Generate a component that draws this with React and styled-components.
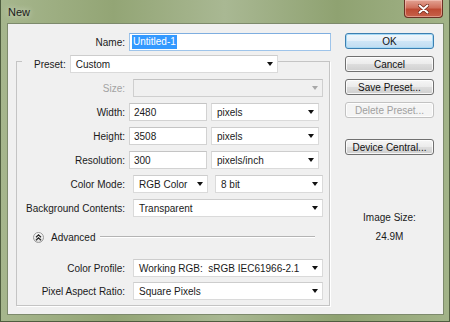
import styled, {createGlobalStyle} from 'styled-components';

const GlobalStyle = createGlobalStyle`
  html, body {
    margin: 0;
    padding: 0;
    background: #ffffff;
  }
  body {
    font-family: "Liberation Sans", Arial, sans-serif;
    font-size: 10px;
    color: #111;
  }
`;

export default function App() {
  return (
    <>
      <GlobalStyle />
      <Window>
        <TitleBar>
          <Title>New</Title>
          <CloseButton>
            <svg width="11" height="10" viewBox="0 0 11 10">
              <path
                d="M1.5 1.5 L9.5 8.5 M9.5 1.5 L1.5 8.5"
                stroke="#6b2416"
                strokeWidth="3.4"
                strokeLinecap="round"
              />
              <path
                d="M1.5 1.5 L9.5 8.5 M9.5 1.5 L1.5 8.5"
                stroke="#ffffff"
                strokeWidth="2"
                strokeLinecap="round"
              />
            </svg>
          </CloseButton>
        </TitleBar>
        <Client>
          <MainColumn>
            <Row>
              <Label $width={113}>Name:</Label>
              <TextBox $focused $grow>
                <Selected>Untitled-1</Selected>
              </TextBox>
            </Row>

            <GroupBox>
              <Legend>
                <LegendLabel>Preset:</LegendLabel>
                <Select $width={208}>
                  Custom
                  <Arrow />
                </Select>
              </Legend>

              <Rows>
                <Row>
                  <Label $disabled>Size:</Label>
                  <Select $width={190} $disabled>
                    <span />
                    <Arrow $disabled />
                  </Select>
                </Row>
                <Row>
                  <Label>Width:</Label>
                  <TextBox $width={78}>2480</TextBox>
                  <Select $width={108}>
                    pixels
                    <Arrow />
                  </Select>
                </Row>
                <Row>
                  <Label>Height:</Label>
                  <TextBox $width={78}>3508</TextBox>
                  <Select $width={108}>
                    pixels
                    <Arrow />
                  </Select>
                </Row>
                <Row>
                  <Label>Resolution:</Label>
                  <TextBox $width={78}>300</TextBox>
                  <Select $width={108}>
                    pixels/inch
                    <Arrow />
                  </Select>
                </Row>
                <Row>
                  <Label>Color Mode:</Label>
                  <Select $width={75}>
                    RGB Color
                    <Arrow />
                  </Select>
                  <Select $width={108} $gap={7}>
                    8 bit
                    <Arrow />
                  </Select>
                </Row>
                <Row>
                  <Label>Background Contents:</Label>
                  <Select $width={190}>
                    Transparent
                    <Arrow />
                  </Select>
                </Row>
              </Rows>

              <AdvancedRow>
                <ToggleIcon>
                  <svg width="7" height="7" viewBox="0 0 7 7">
                    <path
                      d="M1 3.2 L3.5 0.9 L6 3.2 M1 6.2 L3.5 3.9 L6 6.2"
                      stroke="#222"
                      strokeWidth="1.2"
                      fill="none"
                    />
                  </svg>
                </ToggleIcon>
                <AdvancedText>Advanced</AdvancedText>
                <Etched />
              </AdvancedRow>

              <Rows $gap={5}>
                <Row>
                  <Label>Color Profile:</Label>
                  <Select $width={190}>
                    Working RGB:&nbsp; sRGB IEC61966-2.1
                    <Arrow />
                  </Select>
                </Row>
                <Row>
                  <Label>Pixel Aspect Ratio:</Label>
                  <Select $width={190}>
                    Square Pixels
                    <Arrow />
                  </Select>
                </Row>
              </Rows>
            </GroupBox>
          </MainColumn>

          <SideColumn>
            <Button $default>OK</Button>
            <Button>Cancel</Button>
            <Button>Save Preset...</Button>
            <Button $disabled>Delete Preset...</Button>
            <Button $space={21}>Device Central...</Button>
            <SizeInfo>
              <span>Image Size:</span>
              <span>24.9M</span>
            </SizeInfo>
          </SideColumn>
        </Client>
      </Window>
    </>
  );
}

const Window = styled.div`
  box-sizing: border-box;
  width: 450px;
  height: 322px;
  display: flex;
  flex-direction: column;
  padding: 0 5px 6px 6px;
  border: 1px solid #4f5d3f;
  border-top: none;
  background: linear-gradient(
    90deg,
    #a6b68d 0%,
    #93a575 25%,
    #a9b893 50%,
    #8fa271 75%,
    #a2b388 100%
  );
`;

const TitleBar = styled.div`
  height: 23px;
  display: flex;
  align-items: flex-start;
  justify-content: space-between;
  flex-shrink: 0;
`;

const Title = styled.div`
  padding: 6px 0 0 1px;
  font-size: 11px;
  color: #1a1a1a;
  text-shadow: 0 0 6px rgba(255, 255, 255, 0.7);
`;

const CloseButton = styled.div`
  box-sizing: border-box;
  width: 39px;
  height: 18px;
  margin-right: 1px;
  display: flex;
  align-items: center;
  justify-content: center;
  border: 1px solid #6a3024;
  border-top: none;
  border-radius: 0 0 4px 4px;
  background: linear-gradient(180deg, #e3a394 0%, #d0705c 45%, #bd4a33 55%, #c7614a 100%);
  box-shadow: inset 0 0 0 1px rgba(255, 220, 210, 0.45);
`;

const Client = styled.div`
  flex: 1;
  display: flex;
  gap: 14px;
  padding: 9px 9px 0 8px;
  background: #f0f0f0;
  border: 1px solid #7d8a6c;
`;

const MainColumn = styled.div`
  width: 315px;
  display: flex;
  flex-direction: column;
`;

const Row = styled.div`
  display: flex;
  align-items: center;
  height: 18px;
`;

const Label = styled.div`
  box-sizing: border-box;
  width: ${p => p.$width || 112}px;
  padding-right: 4px;
  text-align: right;
  white-space: nowrap;
  color: ${p => (p.$disabled ? '#a3a3a3' : '#1a1a1a')};
`;

const TextBox = styled.div`
  box-sizing: border-box;
  height: 18px;
  ${p => (p.$grow ? 'flex: 1;' : `width: ${p.$width}px;`)}
  display: flex;
  align-items: center;
  padding-left: ${p => (p.$focused ? 2 : 4)}px;
  background: #ffffff;
  border: 1px solid ${p => (p.$focused ? '#9ec4ea' : '#d2d2d2')};
  border-top-color: ${p => (p.$focused ? '#7eaee0' : '#c4c4c4')};
  color: #1a1a1a;
`;

const Selected = styled.span`
  background: #3399ff;
  color: #ffffff;
  padding: 1px 1px;
  line-height: 12px;
`;

const Select = styled.div`
  box-sizing: border-box;
  height: 18px;
  width: ${p => p.$width}px;
  margin-left: ${p => p.$gap ?? 4}px;
  display: flex;
  align-items: center;
  justify-content: space-between;
  padding: 0 4px 0 5px;
  white-space: nowrap;
  background: ${p => (p.$disabled ? '#f0f0f0' : '#ffffff')};
  border: 1px solid ${p => (p.$disabled ? '#cfcfcf' : '#dadada')};
  border-top-color: ${p => (p.$disabled ? '#c2c2c2' : '#cdcdcd')};
  color: #1a1a1a;
`;

const Arrow = styled.span`
  width: 0;
  height: 0;
  border-left: 3px solid transparent;
  border-right: 3px solid transparent;
  border-top: 4px solid ${p => (p.$disabled ? '#a8a8a8' : '#111')};
`;

const GroupBox = styled.fieldset`
  box-sizing: border-box;
  width: 314px;
  margin: -2px 0 0 0;
  padding: 0 0 5px 0;
  border: 1px solid #c4c4c4;
  box-shadow: 1px 1px 0 #ffffff;
`;

const Legend = styled.legend`
  display: flex;
  align-items: center;
  margin-left: 5px;
  padding: 6px 0 0 0;
`;

const LegendLabel = styled.span`
  margin-left: 12px;
  color: #1a1a1a;
`;

const Rows = styled.div`
  display: flex;
  flex-direction: column;
  gap: ${p => p.$gap ?? 6}px;
  padding-top: ${p => (p.$gap ? 15 : 6)}px;
`;

const AdvancedRow = styled.div`
  display: flex;
  align-items: center;
  height: 14px;
  margin: 13px 14px 0 16px;
`;

const ToggleIcon = styled.div`
  box-sizing: border-box;
  width: 11px;
  height: 11px;
  border-radius: 50%;
  border: 1px solid #9a9a9a;
  background: linear-gradient(180deg, #ffffff, #dcdcdc);
  display: flex;
  align-items: center;
  justify-content: center;
`;

const AdvancedText = styled.span`
  margin-left: 7px;
  color: #1a1a1a;
`;

const Etched = styled.div`
  flex: 1;
  margin-left: 5px;
  height: 0;
  border-top: 1px solid #b4b4b4;
  border-bottom: 1px solid #ffffff;
`;

const SideColumn = styled.div`
  width: 89px;
  display: flex;
  flex-direction: column;
  gap: 7px;
`;

const Button = styled.div`
  box-sizing: border-box;
  height: 16px;
  margin-top: ${p => (p.$space ? p.$space - 7 : 0)}px;
  display: flex;
  align-items: center;
  justify-content: center;
  border-radius: 3px;
  border: 1px solid ${p => (p.$default ? '#3c7fb1' : p.$disabled ? '#c2c2c2' : '#707070')};
  background: ${p =>
    p.$disabled
      ? '#f4f4f4'
      : p.$default
      ? 'linear-gradient(180deg, #f0f7fc 0%, #e3eff9 50%, #cfe6f7 51%, #c1dcf1 100%)'
      : 'linear-gradient(180deg, #f6f6f6 0%, #ebebeb 50%, #dddddd 51%, #cfcfcf 100%)'};
  box-shadow: inset 0 0 0 1px ${p => (p.$default ? '#a6d9f5' : 'rgba(255,255,255,0.8)')};
  color: ${p => (p.$disabled ? '#a0a0a0' : '#111')};
  white-space: nowrap;
`;

const SizeInfo = styled.div`
  margin-top: 50px;
  display: flex;
  flex-direction: column;
  align-items: center;
  gap: 7px;
  line-height: 12px;
  color: #1a1a1a;
`;
